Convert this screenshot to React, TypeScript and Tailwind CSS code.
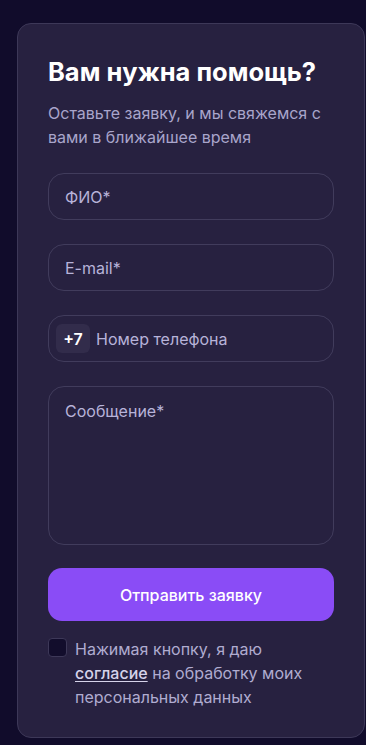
const Field = ({ placeholder }: { placeholder: string }) => (
  <div className="flex h-[47px] items-center rounded-[16px] border border-[#413c5c] px-[16px] text-[16px] text-[#b7b3d9]">
    {placeholder}
  </div>
);

export default function App() {
  return (
    <div
      className="min-h-[745px] bg-[#110c2b] pt-[23px] pl-[17px]"
      style={{ fontFamily: "Inter, 'Noto Sans', sans-serif" }}
    >
      <div className="w-[348px] rounded-[14px] border border-[#3d3858] bg-[#272140] px-[30px] pt-[32px] pb-[28px]">
        <h2 className="text-[25.5px] font-bold leading-[32px] text-white">Вам нужна помощь?</h2>
        <p className="mt-[13px] text-[16px] leading-[24px] text-[#a9a5cb]">
          Оставьте заявку, и мы свяжемся с вами в ближайшее время
        </p>

        <div className="mt-[24px] flex flex-col gap-[24px]">
          <Field placeholder="ФИО*" />
          <Field placeholder="E-mail*" />
          <div className="flex h-[47px] items-center gap-[6px] rounded-[16px] border border-[#413c5c] pl-[7px] pr-[16px] text-[16px] text-[#b7b3d9]">
            <span className="flex h-[29px] w-[34px] items-center justify-center rounded-[6px] bg-[#322c4b] font-semibold text-white">
              +7
            </span>
            Номер телефона
          </div>
          <div className="h-[159px] rounded-[16px] border border-[#413c5c] px-[16px] pt-[12px] text-[16px] text-[#b7b3d9]">
            Сообщение*
          </div>
        </div>

        <button className="mt-[23px] flex h-[53px] w-full items-center justify-center rounded-[14px] bg-[#8a4cf6] text-[16px] font-medium text-white">
          Отправить заявку
        </button>

        <div className="mt-[16px] flex gap-[8px]">
          <span className="mt-[1px] h-[19px] w-[19px] shrink-0 rounded-[4px] border border-[#3d3858] bg-[#120d2c]" />
          <p className="text-[16px] leading-[24px] text-[#b0acd0]">
            Нажимая кнопку, я даю{" "}
            <span className="font-medium text-[#d6d3ea] underline underline-offset-2">согласие</span> на
            обработку моих персональных данных
          </p>
        </div>
      </div>
    </div>
  );
}
